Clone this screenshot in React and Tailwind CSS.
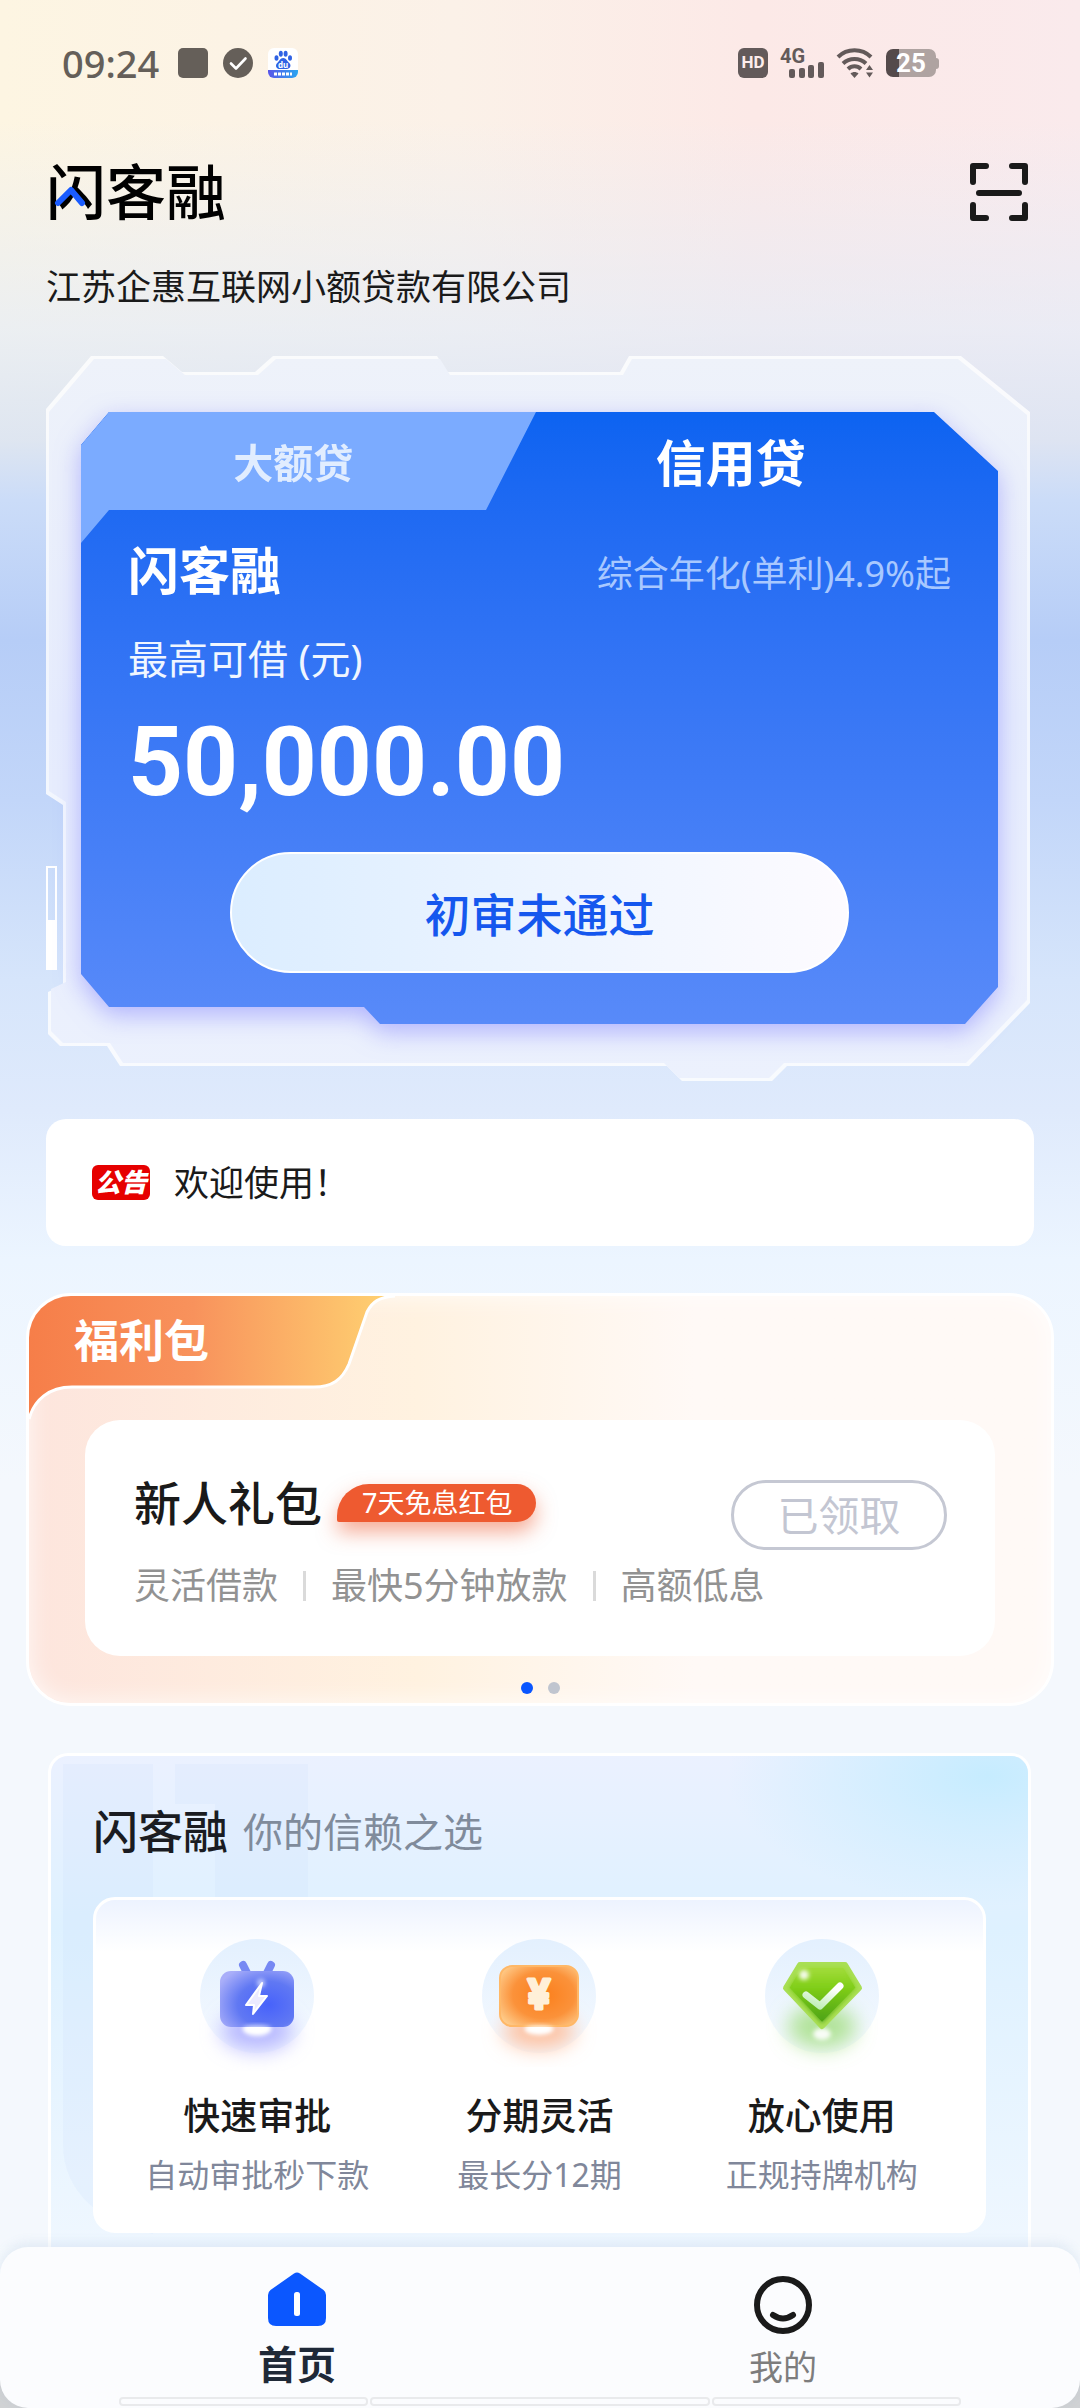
import { useState } from 'react';

const FRAME_CLIP = "[clip-path:polygon(45px_0,117px_0,136px_16px,209px_16px,227px_0,391px_0,401px_16px,574px_16px,583px_0,calc(100%-69px)_0,100%_56px,100%_calc(100%-78px),calc(100%-61px)_calc(100%-15px),calc(100%-243px)_calc(100%-15px),calc(100%-258px)_100%,calc(100%-348px)_100%,calc(100%-363px)_calc(100%-15px),74px_calc(100%-15px),61px_calc(100%-35px),14px_calc(100%-35px),2px_calc(100%-47px),2px_calc(100%-89px),17px_calc(100%-96px),17px_calc(100%-276px),0_calc(100%-287px),0_53px)]";
const CARD_CLIP = "[clip-path:polygon(28px_0,calc(100%-64px)_0,100%_59px,100%_calc(100%-37px),calc(100%-33px)_100%,299px_100%,283px_calc(100%-17px),28px_calc(100%-17px),0_calc(100%-50px),0_33px)]";

const StatusBar = () => (
  <div className="flex h-[46px] items-center justify-between pl-4 pr-[95px] text-[#655f59]">
    <div className="flex items-center gap-[15px]">
      <span className="mr-1 text-[38px] leading-[46px] font-medium">09:24</span>
      <span className="h-[30px] w-[30px] rounded-[5px] bg-[#655f59]"></span>
      <svg className="h-[30px] w-[30px]" viewBox="0 0 30 30" fill="none">
        <circle cx="15" cy="15" r="15" fill="#655f59" />
        <path d="M8 15.500l5 5L22.500 10.500" stroke="#fff" strokeWidth="2.600" strokeLinecap="round" strokeLinejoin="round" />
      </svg>
      <svg className="h-[30px] w-[30px]" viewBox="0 0 30 30">
        <defs>
          <linearGradient id="strip" x1="0" x2="1">
            <stop offset="0" stopColor="#5a55e8" />
            <stop offset="1" stopColor="#2aa5f0" />
          </linearGradient>
        </defs>
        <rect width="30" height="30" rx="6" fill="#fff" />
        <path d="M0 22h30v2a6 6 0 0 1-6 6H6a6 6 0 0 1-6-6z" fill="url(#strip)" />
        <g fill="#2f62e4">
          <ellipse cx="8.500" cy="10" rx="2" ry="2.800" />
          <ellipse cx="12.800" cy="5.800" rx="2" ry="3" />
          <ellipse cx="17.600" cy="5.800" rx="2" ry="3" />
          <ellipse cx="22" cy="10" rx="2" ry="2.800" />
          <path d="M15.200 10c3 0 3.800 3 5.800 4.800 3 2.700 1 6.200-2.200 6.200h-7c-3.400 0-5.300-3.600-2.300-6.300C11.500 13 12.200 10 15.200 10z" />
        </g>
        <text x="15.200" y="19.500" fill="#fff" fontSize="8" fontWeight="700" textAnchor="middle">du</text>
        <path d="M6 26h18" stroke="#fff" strokeWidth="3" strokeDasharray="3 1" />
      </svg>
    </div>

    <div className="flex items-center gap-3 text-[#635a5a]">
      <span className="flex h-[30px] w-[30px] items-center justify-center rounded-[6px] bg-[#635a5a] font-[Roboto] text-[17px] font-bold text-[#fdeceb]">HD</span>
      <svg className="h-[30px] w-[44px] overflow-visible" viewBox="0 0 44 30" fill="currentColor">
        <text x="0" y="15" fontSize="20" fontWeight="700" fontFamily="Roboto">4G</text>
        <rect x="9" y="21" width="6" height="9" rx="2" />
        <rect x="19" y="20" width="6" height="10" rx="2" />
        <rect x="28" y="17" width="6" height="13" rx="2" />
        <rect x="38" y="14" width="6" height="16" rx="2" />
      </svg>
      <svg className="h-[30px] w-[38px]" viewBox="0 0 38 30" fill="none" stroke="currentColor" strokeWidth="4">
        <path d="M2 9C11 0 26 0 35 9" />
        <path d="M7 15.500c6.500-6 16.500-6 23 0" />
        <path d="M12 21c3.800-3.600 9.200-3.600 13 0" />
        <path d="M18.500 30l-4-4.500c2.400-2 5.600-2 8 0z" fill="currentColor" stroke="none" />
        <path d="M30 22l3.500-5 3.500 5zM30 24.500l3.500 5 3.500-5z" fill="currentColor" stroke="none" />
      </svg>
      <div className="flex items-center">
        <span className="flex h-[28px] w-[50px] items-center justify-center rounded-[7px] bg-linear-to-r from-[#544a4b] from-25% to-[#afa3a1] to-25% font-[Roboto] text-[26px] leading-[28px] font-bold text-white">25</span>
        <span className="h-[11px] w-[3px] rounded-r-[3px] bg-[#afa3a1]"></span>
      </div>
    </div>
  </div>
);

const Header = () => (
  <header>
    <div className="mt-[71px] flex h-[70px] items-center justify-between pr-[6px]">
      <h1 className="relative text-[60px] leading-[70px] font-medium text-black">
        闪客融
        <svg className="absolute top-6 left-2 h-[32px] w-[46px]" viewBox="0 0 46 32" fill="none" strokeWidth="6" strokeLinecap="round" strokeLinejoin="round">
          <path d="M4 22L17 9l11 13" stroke="#1a5cff" />
        </svg>
      </h1>
      <button type="button" aria-label="扫一扫" className="h-[58px] w-[58px]">
        <svg viewBox="0 0 58 58" fill="none" stroke="#1a1a1a" strokeWidth="6" strokeLinecap="round" strokeLinejoin="round">
          <path d="M3 19V3h13M42 3h13v16M55 42v13H42M16 55H3V42M9 30h40" />
        </svg>
      </button>
    </div>
    <p className="mt-10 text-[35px] leading-[40px] text-[#1a1a1a]">江苏企惠互联网小额贷款有限公司</p>
  </header>
);

const LoanCard = () => {
  const [tab, setTab] = useState('credit');

  return (
    <section className="relative mt-[49px] mr-1 pt-14 pr-8 pb-[57px] pl-[35px]">
      <div className={`absolute inset-0 bg-white/80 ${FRAME_CLIP}`}></div>
      <div className={`absolute inset-[3px] bg-linear-to-b from-[#eef2fa] via-[#e6ecfd] to-[#ecf1fd] ${FRAME_CLIP}`}></div>
      <div className="absolute bottom-[111px] left-0 h-[104px] w-[11px] border-2 border-white bg-linear-to-b from-transparent from-52% to-white to-52%"></div>

      <div className="relative drop-shadow-[0_8px_12px_rgba(120,120,255,0.5)]">
        <div className={`bg-linear-to-b from-[#0c63f1] to-[#588af9] pb-[51px] ${CARD_CLIP}`}>
          <div role="tablist" className="flex h-[98px]">
            <button
              type="button"
              role="tab"
              aria-selected={tab === 'large'}
              onClick={() => setTab('large')}
              className="relative w-1/2 pt-1 pr-[34px] text-[40px] font-bold text-[#e1edff]"
            >
              <span className="absolute top-0 left-0 h-[131px] w-[455px] bg-[#7babff] [clip-path:polygon(28px_0,100%_0,405px_98px,28px_98px,0_100%,0_33px)]"></span>
              <span className="relative">大额贷</span>
            </button>
            <button
              type="button"
              role="tab"
              aria-selected={tab === 'credit'}
              onClick={() => setTab('credit')}
              className="flex-1 pt-1 pr-[76px] text-[50px] font-bold text-white"
            >
              信用贷
            </button>
          </div>

          <div className="mt-[30px] flex h-[60px] items-center justify-between pr-[47px] pl-[47px]">
            <h2 className="text-[51px] leading-[60px] font-bold text-white">闪客融</h2>
            <p className="pt-2 text-[36px] leading-[60px] text-[#a8c8ff]">综合年化(单利)4.9%起</p>
          </div>
          <p className="mt-[34px] pl-[47px] text-[40px] leading-[50px] text-[#f0f6ff]">最高可借 (元)</p>
          <p className="mt-7 pl-[47px] font-[Roboto] text-[96px] leading-[100px] font-bold text-white">50,000.00</p>
          <div className="mt-10 px-[149px]">
            <button type="button" className="h-[121px] w-full rounded-full border-2 border-white bg-linear-to-r from-[#dbedff] to-[#fdfbff] pt-1 text-[46px] font-medium text-[#1557ee]">
              初审未通过
            </button>
          </div>
        </div>
      </div>
    </section>
  );
};

const Notice = () => (
  <div className="mt-[38px] flex h-[127px] items-center gap-6 rounded-[20px] bg-white px-[46px]">
    <span className="flex h-[35px] w-[58px] items-center justify-center rounded-[6px] bg-[#e60000] text-[26px] leading-[35px] font-black text-white italic">公告</span>
    <span className="text-[35px] leading-[40px] text-[#1a1a1a]">欢迎使用！</span>
  </div>
);

const WelfarePack = () => (
  <section className="relative -mx-[20px] mt-[47px] overflow-hidden rounded-[45px] border-3 border-white bg-linear-to-r from-[#fde5dd] via-[#fff2e0] via-38% to-[#fff9f6] to-65% pb-[9px] shadow-[inset_0_0_24px_rgba(255,255,255,0.8)]">
    <svg className="absolute top-0 left-0 h-[126px] w-[372px]" viewBox="0 0 372 126" fill="none">
      <defs>
        <linearGradient id="tabFill" x1="0" x2="1">
          <stop offset="0" stopColor="#f67e49" />
          <stop offset="0.450" stopColor="#f8925c" />
          <stop offset="1" stopColor="#ffd372" />
        </linearGradient>
      </defs>
      <path d="M0 0H366C350 1 343 6 338 16L320 68C313 84 303 91 285 91H43C20 91 5 104 0 123Z" fill="url(#tabFill)" />
      <path d="M366 0C350 1 343 6 338 16L320 68C313 84 303 91 285 91H43C20 91 5 104 0 123" stroke="#fff" strokeWidth="3" />
    </svg>
    <h2 className="relative mt-[20px] mb-[54px] pl-[45px] text-[45px] leading-[50px] font-bold text-white">福利包</h2>

    <div className="mx-14 rounded-[35px] bg-white pt-[58px] pr-[48px] pb-[50px] pl-[49px]">
      <div className="flex items-start justify-between">
        <div className="flex h-[50px] items-center gap-[15px]">
          <h3 className="text-[47px] leading-[50px] font-medium text-[#1a1a1a]">新人礼包</h3>
          <span className="rounded-tl-[32px] rounded-r-[19px] rounded-bl-[2px] bg-[#ee5a30] pr-6 pl-[25px] text-[27px] leading-[38px] text-white shadow-[0_10px_20px_rgba(238,90,48,0.5)]">7天免息红包</span>
        </div>
        <button type="button" disabled className="mt-[2px] h-[70px] w-[216px] rounded-full border-3 border-[#c5c8d3] text-[41px] leading-[60px] text-[#c3c6d2]">已领取</button>
      </div>
      <div className="mt-4 flex h-10 items-center gap-[25px] text-[36px] leading-[40px] text-[#929292]">
        <span>灵活借款</span>
        <span className="h-[30px] w-[3px] bg-[#dadada]"></span>
        <span>最快5分钟放款</span>
        <span className="h-[30px] w-[3px] bg-[#dadada]"></span>
        <span>高额低息</span>
      </div>
    </div>

    <div className="mt-[26px] flex justify-center gap-[15px]">
      <span className="h-3 w-3 rounded-full bg-[#0a56ff]"></span>
      <span className="h-3 w-3 rounded-full bg-[#c0c5cf]"></span>
    </div>
  </section>
);

const IconBase = ({ children }) => (
  <svg className="h-[150px] w-[150px]" viewBox="0 0 150 150" fill="none">
    <defs>
      <linearGradient id="disc" x1="0" x2="0" y1="0" y2="1">
        <stop offset="0" stopColor="#e3f0fe" />
        <stop offset="1" stopColor="#f6faff" />
      </linearGradient>
      <filter id="glow" x="-50%" y="-50%" width="200%" height="200%">
        <feGaussianBlur stdDeviation="10" />
      </filter>
      <filter id="soft" x="-50%" y="-50%" width="200%" height="200%">
        <feGaussianBlur stdDeviation="2" />
      </filter>
    </defs>
    <circle cx="75" cy="57" r="57" fill="url(#disc)" />
    {children}
  </svg>
);

const FastIcon = () => (
  <IconBase>
    <defs>
      <radialGradient id="fastFill" cx="0.650" cy="0.600" r="0.750">
        <stop offset="0" stopColor="#4762fb" />
        <stop offset="0.550" stopColor="#6078f3" />
        <stop offset="1" stopColor="#a9aef9" />
      </radialGradient>
    </defs>
    <ellipse cx="75" cy="92" rx="36" ry="20" fill="#a9a9ff" fillOpacity="0.800" filter="url(#glow)" />
    <path d="M61 26l4 8M89 26l-4 8" stroke="#7688f3" strokeWidth="8" strokeLinecap="round" />
    <ellipse cx="75" cy="90" rx="14" ry="7" fill="#fff" filter="url(#soft)" />
    <rect x="38" y="32" width="74" height="56" rx="11" fill="url(#fastFill)" />
    <ellipse cx="75" cy="89" rx="14" ry="3" fill="#fff" fillOpacity="0.700" filter="url(#soft)" />
    <path d="M80 44L64 66h8l-1 9 14-18h-8z" fill="#ecebff" stroke="#fff" strokeWidth="2" strokeLinejoin="round" />
    <circle cx="79" cy="44" r="4" fill="#fff" fillOpacity="0.600" filter="url(#soft)" />
  </IconBase>
);

const InstallmentIcon = () => (
  <IconBase>
    <defs>
      <radialGradient id="moneyFill" cx="0.560" cy="0.480" r="0.720">
        <stop offset="0" stopColor="#fb7f1c" />
        <stop offset="0.550" stopColor="#fb923a" />
        <stop offset="1" stopColor="#ffd79a" />
      </radialGradient>
    </defs>
    <ellipse cx="75" cy="92" rx="36" ry="18" fill="#ffb893" fillOpacity="0.850" filter="url(#glow)" />
    <ellipse cx="75" cy="90" rx="14" ry="6" fill="#fff" filter="url(#soft)" />
    <rect x="36" y="27" width="78" height="60" rx="12" fill="url(#moneyFill)" stroke="#ffb867" strokeWidth="2" />
    <ellipse cx="75" cy="89" rx="14" ry="3" fill="#fff" fillOpacity="0.700" filter="url(#soft)" />
    <text x="75" y="70" fill="#fff0d8" stroke="#fff0d8" strokeWidth="3" strokeLinejoin="round" fontSize="42" fontWeight="700" textAnchor="middle" fontFamily="Roboto">¥</text>
  </IconBase>
);

const SafeIcon = () => (
  <IconBase>
    <defs>
      <linearGradient id="gemFill" x1="0" y1="0" x2="0" y2="1">
        <stop offset="0" stopColor="#a4dd3c" />
        <stop offset="0.350" stopColor="#82cf1a" />
        <stop offset="1" stopColor="#4aa012" />
      </linearGradient>
      <linearGradient id="tick" x1="0" y1="1" x2="0.600" y2="0">
        <stop offset="0" stopColor="#b9ecae" />
        <stop offset="1" stopColor="#fff" />
      </linearGradient>
    </defs>
    <ellipse cx="75" cy="88" rx="34" ry="22" fill="#9cdc78" fillOpacity="0.750" filter="url(#glow)" />
    <ellipse cx="75" cy="95" rx="9" ry="6" fill="#fff" fillOpacity="0.900" filter="url(#soft)" />
    <path d="M53 26H98L112 49 75 87 39 49Z" fill="url(#gemFill)" stroke="#a9df55" strokeWidth="6" strokeLinejoin="round" />
    <path d="M54 28H97L109 49 75 84 42 49Z" fill="url(#gemFill)" filter="url(#soft)" />
    <circle cx="57" cy="36" r="5" fill="#fff" fillOpacity="0.900" filter="url(#soft)" />
    <path d="M59 56l14 11L93 47" stroke="url(#tick)" strokeWidth="7" strokeLinecap="round" strokeLinejoin="round" />
  </IconBase>
);

const features = [
  { name: '快速审批', desc: '自动审批秒下款', Icon: FastIcon },
  { name: '分期灵活', desc: '最长分12期', Icon: InstallmentIcon },
  { name: '放心使用', desc: '正规持牌机构', Icon: SafeIcon },
];

const Features = () => (
  <section className="relative mt-[47px] mr-[3px] ml-[2px] flex-1 overflow-hidden rounded-t-[20px] border-3 border-b-0 border-white bg-linear-to-b from-[#ebf1ff] via-[#def1ff] via-35% to-[#eff7ff] px-[42px] pt-[46px] pb-[13px]">
    <div className="absolute -top-[110px] -right-[220px] h-[260px] w-[520px] bg-[radial-gradient(closest-side,#c6ecff,transparent)]"></div>
    {/* faint block pattern behind the title */}
    <svg className="absolute top-2 left-3 h-[470px] w-[245px]" viewBox="0 0 245 470" fill="#c5d8fb" fillOpacity="0.150">
      <path d="M0 0h90v470C40 460 0 430 0 380zM112 0h133v200H152V40h-40z" />
    </svg>

    <div className="relative flex h-[60px] items-center gap-[15px]">
      <h2 className="text-[45px] leading-[60px] font-medium text-[#1a1c22]">闪客融</h2>
      <span className="text-[40px] leading-[60px] text-[#808b9b]">你的信赖之选</span>
    </div>

    <ul className="relative mt-[35px] grid grid-cols-3 rounded-[22px] border-3 border-white bg-linear-to-b from-[#edf3ff] to-white to-[52px] px-5 pt-[39px] pb-[35px]">
      {features.map(({ name, desc, Icon }) => (
        <li key={name} className="flex flex-col items-center">
          <Icon />
          <h3 className="mt-[6px] text-[37px] leading-[42px] font-medium text-[#1a1a1a]">{name}</h3>
          <p className="mt-[18px] text-[32px] leading-[40px] text-[#80879a]">{desc}</p>
        </li>
      ))}
    </ul>
  </section>
);

const TabBar = () => (
  <div className="sticky bottom-0 bg-linear-to-b from-[#f5f9fd] from-50% to-[#d0d2d4] to-50%">
    <nav className="rounded-[28px] bg-[#fbfcfe] pt-6 shadow-[0_-4px_12px_rgba(90,130,180,0.12)]">
      <div className="flex">
        <a href="#home" className="flex w-[55%] flex-col items-center text-[39px] leading-[46px] font-bold text-[#1f2937]">
          <svg className="mb-[14px] h-[56px] w-[58px]" viewBox="0 0 58 56">
            <path d="M26 2.500a5 5 0 0 1 6 0L55.500 19Q58 21 58 24V47Q58 55 50 55H8Q0 55 0 47V24q0-3 2.500-5z" fill="#0b57ff" />
            <rect x="26" y="21" width="6" height="24" rx="2.500" fill="#fff" />
          </svg>
          首页
        </a>
        <a href="#mine" className="flex w-[35%] flex-col items-center pt-[5px] text-[34px] leading-[40px] text-[#7d7d7d]">
          <svg className="mb-[13px] h-[58px] w-[58px]" viewBox="0 0 58 58" fill="none" stroke="#1a1a1a" strokeWidth="6" strokeLinecap="round">
            <circle cx="29" cy="29" r="26" />
            <path d="M19 39q10 7 20 0" />
          </svg>
          我的
        </a>
      </div>
      <div className="mx-[119px] mt-[10px] flex h-[11px] gap-[2px] pb-[2px]">
        <span className="flex-[248] rounded-[4px] border-2 border-[#e9eaec]"></span>
        <span className="flex-[341] rounded-[4px] border-2 border-[#e9eaec]"></span>
        <span className="flex-[248] rounded-[4px] border-2 border-[#e9eaec]"></span>
      </div>
    </nav>
  </div>
);

const App = () => {
  return (
    <div className="flex min-h-screen flex-col bg-[linear-gradient(to_bottom,transparent_120px,rgba(228,236,248,0.7)_330px,rgba(217,227,243,0.85)_440px,#cbdcf8_500px,#b6cdf7_640px,#c2d6f9_800px,#d6e5fb_980px,#dfeafc_1110px,#ecf5ff_1260px,#f4f8fd_1480px),linear-gradient(to_right,#fdf5e2,#fbf1e8_42%,#fce9e7_70%,#faeaec)] font-['Noto_Sans','Noto_Sans_CJK_SC',sans-serif]">
      <main className="flex flex-1 flex-col px-[46px] pt-10">
        <StatusBar />
        <Header />
        <LoanCard />
        <Notice />
        <WelfarePack />
        <Features />
      </main>
      <TabBar />
    </div>
  );
};

export default App;
